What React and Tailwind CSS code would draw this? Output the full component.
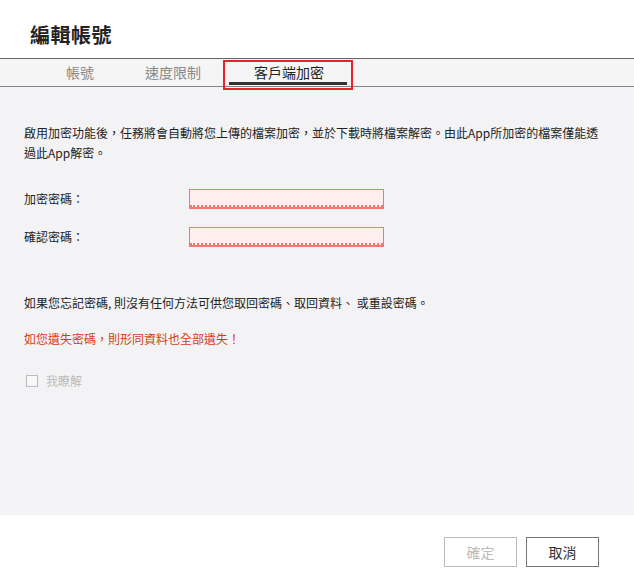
const font = "font-['Microsoft_JhengHei','Noto_Sans_CJK_TC',sans-serif]";

function PasswordField({ label }) {
  return (
    <div className="flex h-[19px] items-center">
      <span className="w-[165px] text-[12px] text-[#222]">{label}</span>
      <div className="flex h-[20px] w-[195px] flex-col border border-b-2 border-[#f4766f] bg-[#ffeeee]">
        <div className="flex-1" />
        <div className="h-[2px] border-t-2 border-dotted border-[#f4766f]" />
      </div>
    </div>
  );
}

export default function App() {
  return (
    <div className={`flex h-[587px] w-[634px] flex-col bg-white ${font}`}>
      <div className="flex h-[58px] items-center px-[30px] pt-[12px]">
        <h1 className="text-[20px] font-bold tracking-[0.5px] text-[#222]">編輯帳號</h1>
      </div>

      <div className="flex h-[29px] items-stretch border-y border-t-[#666] border-b-[#888] bg-[#f5f5f5] text-[14px]">
        <div className="w-[66px]" />
        <div className="flex items-center text-[#888]">帳號</div>
        <div className="w-[51px]" />
        <div className="flex items-center text-[#888]">速度限制</div>
        <div className="w-[22px]" />
        <div className="relative -mb-[4px] mt-[1px] flex w-[130px] justify-center border-2 border-[#e8212e]">
          <div className="mx-[4px] mb-[3px] flex flex-1 items-center justify-center border-b-[3px] border-[#333] pl-[2px] text-[#222]">
            客戶端加密
          </div>
        </div>
      </div>

      <div className="flex flex-1 flex-col bg-[#f3f3f5] px-[24px] pt-[36px] text-[12px] text-[#222]">
        <p className="leading-[20px]">
          啟用加密功能後，任務將會自動將您上傳的檔案加密，並於下載時將檔案解密。由此App所加密的檔案僅能透過此App解密。
        </p>

        <div className="mt-[26px] flex flex-col gap-[19px]">
          <PasswordField label="加密密碼：" />
          <PasswordField label="確認密碼：" />
        </div>

        <p className="mt-[47px] leading-[20px]">如果您忘記密碼, 則沒有任何方法可供您取回密碼、取回資料、 或重設密碼。</p>
        <p className="mt-[16px] leading-[20px] text-[#d63c10]">如您遺失密碼，則形同資料也全部遺失！</p>

        <label className="mt-[23px] flex items-center gap-[8px] text-[#bbb]">
          <span className="ml-[2px] h-[12px] w-[12px] border border-[#bbb] bg-[#f8f8f8]" />
          我瞭解
        </label>
      </div>

      <div className="flex h-[72px] items-center justify-end gap-[9px] pr-[35px] pt-[2px] text-[14px]">
        <button className="h-[30px] w-[73px] border border-[#bbb] bg-white text-[#bbb]">確定</button>
        <button className="h-[30px] w-[73px] border border-[#777] bg-white text-[#333]">取消</button>
      </div>
    </div>
  );
}
